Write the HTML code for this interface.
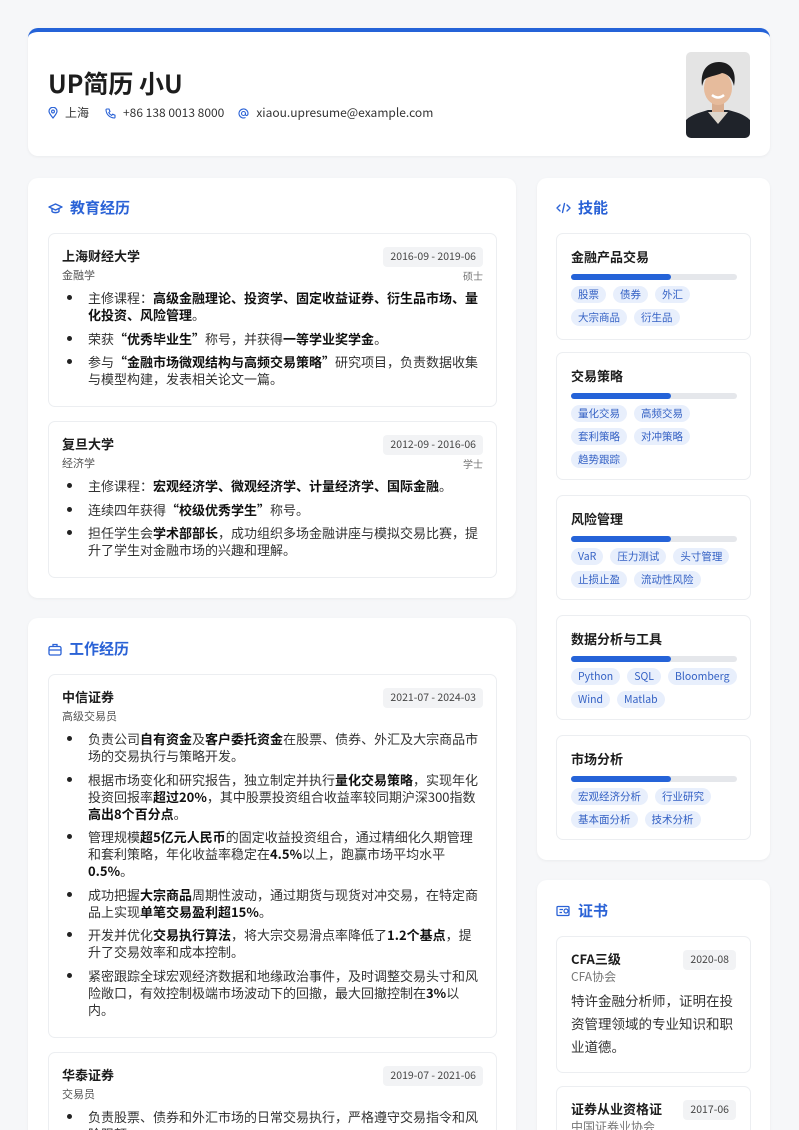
<!DOCTYPE html>
<html><head><meta charset="utf-8">
<style>
*{box-sizing:border-box;margin:0;padding:0}
html,body{width:799px;height:1130px;overflow:hidden}
body{background:#f6f7f9;font-family:"Noto Sans CJK SC","Liberation Sans",sans-serif;color:#222;position:relative}
.card{position:absolute;background:#fff;border-radius:10px;box-shadow:0 1px 3px rgba(0,0,0,.05)}
.hdr{left:28px;top:28px;width:742px;height:128px;border-top:4px solid #2563d8}
.name{position:absolute;left:20px;top:34px;font-size:25px;line-height:34px;font-weight:bold;color:#1d1d1d}
.contact{position:absolute;left:20px;top:72px;font-size:12px;line-height:18px;color:#333;display:flex;align-items:center}
.contact span{display:flex;align-items:center;margin-right:14px}
.contact svg{margin-right:7px}
.photo{position:absolute;left:658px;top:20px;width:64px;height:86px;border-radius:5px;overflow:hidden}
.st{position:absolute;left:20px;top:18px;font-size:15px;line-height:24px;font-weight:bold;color:#2a62d6;display:flex;align-items:center}
.st svg{margin-right:7px}
.item{position:absolute;left:20px;border:1px solid #eceef1;border-radius:7px;background:#fff}
.it{position:absolute;left:13px;top:12px;font-size:13px;line-height:20px;font-weight:bold;color:#1d1d1d}
.sub{position:absolute;left:13px;top:33px;font-size:11px;line-height:16px;color:#555}
.deg{position:absolute;right:13px;top:34px;font-size:10px;line-height:16px;color:#777}
.date{position:absolute;right:13px;top:13px;background:#f2f3f5;border-radius:4px;font-size:10.5px;line-height:14px;color:#444;padding:3px 7px}
ul{position:absolute;left:13px;right:13px;top:55px;list-style:none;font-size:13px;line-height:17px;color:#333}
li{position:relative;padding-left:26px;margin-bottom:6.5px}
li:before{content:"";position:absolute;left:5px;top:6px;width:5px;height:5px;border-radius:50%;background:#222}
b{color:#111}
.sk{position:absolute;left:19px;width:195px;border:1px solid #eceef1;border-radius:7px}
.sk h4{position:absolute;left:14px;top:13px;font-size:13px;line-height:20px;color:#1d1d1d}
.bar{position:absolute;left:14px;top:40px;width:166px;height:6px;border-radius:3px;background:#e5e7eb}
.bar i{display:block;width:60%;height:100%;border-radius:3px;background:#2563d8}
.tags{position:absolute;left:14px;top:52px;width:170px;display:flex;flex-wrap:wrap;gap:6px 7px}
.tags span{background:#e8effc;color:#3461c4;font-size:10.5px;height:17px;line-height:17px;padding:0 7px;border-radius:9px}
.ce{position:absolute;left:19px;width:195px;border:1px solid #eceef1;border-radius:7px}
.ce h4{position:absolute;left:14px;top:12px;font-size:13px;line-height:20px;color:#1d1d1d}
.ce .date{right:14px;top:13px}
.ce .sub{left:14px;top:32px;font-size:12px;color:#777}
.ce p{position:absolute;left:14px;top:52px;width:170px;font-size:13.5px;line-height:23px;color:#333}
</style></head><body>
<div class="card hdr">
 <div class="name">UP简历 小U</div>
 <div class="contact">
  <span><svg width="10" height="12" viewBox="0 0 10 12"><path d="M5 11C2 7.5 1 6 1 4.3A4 4 0 0 1 9 4.3C9 6 8 7.5 5 11Z" fill="none" stroke="#2a62d6" stroke-width="1.2"/><circle cx="5" cy="4.5" r="1.4" fill="none" stroke="#2a62d6" stroke-width="1.1"/></svg>上海</span>
  <span style="margin-left:2px"><svg width="11" height="11" viewBox="0 0 11 11"><path d="M2 1L4 1 5 3.5 3.8 4.6C4.5 6 5.3 6.8 6.6 7.4L7.7 6.2 10 7.2 10 9.2C10 9.7 9.6 10 9 10 4.5 9.6 1.4 6.5 1 2 1 1.4 1.3 1 2 1Z" fill="none" stroke="#2a62d6" stroke-width="1.1"/></svg>+86 138 0013 8000</span>
  <span><svg width="11" height="11" viewBox="0 0 11 11"><circle cx="5.5" cy="5.5" r="2" fill="none" stroke="#2a62d6" stroke-width="1.1"/><path d="M7.5 5.5V6.5C7.5 8 10 8 10 5.5A4.5 4.5 0 1 0 7.5 9.5" fill="none" stroke="#2a62d6" stroke-width="1.1"/></svg>xiaou.upresume@example.com</span>
 </div>
 <div class="photo"><svg width="64" height="86" viewBox="0 0 64 86"><rect width="64" height="86" fill="#e4e4e4"/><path d="M0 86V68C6 62 16 60 22 58L42 58C50 60 58 62 64 68V86Z" fill="#1f232a"/><path d="M22 60L32 72 42 60Z" fill="#ddd6cc"/><rect x="26" y="48" width="12" height="12" fill="#d9ad8f"/><ellipse cx="32" cy="36" rx="14" ry="17" fill="#e6bb9c"/><path d="M16 34C14 18 22 10 33 10 45 10 51 20 48 34 46 26 42 22 36 21 30 24 22 24 18 28Z" fill="#1c1c1e"/><path d="M26 43Q32 48 38 43" stroke="#fff" stroke-width="2.5" fill="none"/></svg></div>
</div>

<div class="card" style="left:28px;top:178px;width:488px;height:420px">
 <div class="st"><svg width="15" height="13" viewBox="0 0 15 13"><path d="M1 5L7.5 2 14 5 7.5 8Z" fill="none" stroke="#2a62d6" stroke-width="1.4" stroke-linejoin="round"/><path d="M4 6.5V9.5C5.5 11 9.5 11 11 9.5V6.5" fill="none" stroke="#2a62d6" stroke-width="1.4"/></svg>教育经历</div>
 <div class="item" style="top:55px;width:449px;height:174px">
  <div class="it">上海财经大学</div><div class="date">2016-09 - 2019-06</div>
  <div class="sub">金融学</div><div class="deg">硕士</div>
  <ul><li>主修课程：<b>高级金融理论、投资学、固定收益证券、衍生品市场、量化投资、风险管理</b>。</li>
  <li>荣获<b>“优秀毕业生”</b>称号，并获得<b>一等学业奖学金</b>。</li>
  <li>参与<b>“金融市场微观结构与高频交易策略”</b>研究项目，负责数据收集与模型构建，发表相关论文一篇。</li></ul>
 </div>
 <div class="item" style="top:243px;width:449px;height:157px">
  <div class="it">复旦大学</div><div class="date">2012-09 - 2016-06</div>
  <div class="sub">经济学</div><div class="deg">学士</div>
  <ul><li>主修课程：<b>宏观经济学、微观经济学、计量经济学、国际金融</b>。</li>
  <li>连续四年获得<b>“校级优秀学生”</b>称号。</li>
  <li>担任学生会<b>学术部部长</b>，成功组织多场金融讲座与模拟交易比赛，提升了学生对金融市场的兴趣和理解。</li></ul>
 </div>
</div>

<div class="card" style="left:28px;top:618px;width:488px;height:530px">
 <div class="st" style="top:19px"><svg width="14" height="13" viewBox="0 0 14 13"><rect x="1" y="3.5" width="12" height="8.5" rx="1.5" fill="none" stroke="#2a62d6" stroke-width="1.3"/><path d="M5 3.5V1.5H9V3.5M1 7H13" fill="none" stroke="#2a62d6" stroke-width="1.3"/></svg>工作经历</div>
 <div class="item" style="top:56px;width:449px;height:364px">
  <div class="it">中信证券</div><div class="date">2021-07 - 2024-03</div>
  <div class="sub">高级交易员</div>
  <ul><li>负责公司<b>自有资金</b>及<b>客户委托资金</b>在股票、债券、外汇及大宗商品市场的交易执行与策略开发。</li>
  <li>根据市场变化和研究报告，独立制定并执行<b>量化交易策略</b>，实现年化投资回报率<b>超过20%</b>，其中股票投资组合收益率较同期沪深300指数<b>高出8个百分点</b>。</li>
  <li>管理规模<b>超5亿元人民币</b>的固定收益投资组合，通过精细化久期管理和套利策略，年化收益率稳定在<b>4.5%</b>以上，跑赢市场平均水平<b>0.5%</b>。</li>
  <li>成功把握<b>大宗商品</b>周期性波动，通过期货与现货对冲交易，在特定商品上实现<b>单笔交易盈利超15%</b>。</li>
  <li>开发并优化<b>交易执行算法</b>，将大宗交易滑点率降低了<b>1.2个基点</b>，提升了交易效率和成本控制。</li>
  <li>紧密跟踪全球宏观经济数据和地缘政治事件，及时调整交易头寸和风险敞口，有效控制极端市场波动下的回撤，最大回撤控制在<b>3%</b>以内。</li></ul>
 </div>
 <div class="item" style="top:434px;width:449px;height:120px">
  <div class="it">华泰证券</div><div class="date">2019-07 - 2021-06</div>
  <div class="sub">交易员</div>
  <ul><li>负责股票、债券和外汇市场的日常交易执行，严格遵守交易指令和风险限额。</li></ul>
 </div>
</div>

<div class="card" style="left:537px;top:178px;width:233px;height:682px">
 <div class="st" style="left:19px"><svg width="15" height="12" viewBox="0 0 15 12"><path d="M4 3L1 6 4 9M11 3L14 6 11 9M8.5 1.5L6.5 10.5" fill="none" stroke="#2a62d6" stroke-width="1.4" stroke-linecap="round" stroke-linejoin="round"/></svg>技能</div>
 <div class="sk" style="top:55px;height:107px"><h4>金融产品交易</h4><div class="bar"><i></i></div><div class="tags"><span>股票</span><span>债券</span><span>外汇</span><span>大宗商品</span><span>衍生品</span></div></div>
 <div class="sk" style="top:174px;height:128px"><h4>交易策略</h4><div class="bar"><i></i></div><div class="tags"><span>量化交易</span><span>高频交易</span><span>套利策略</span><span>对冲策略</span><span>趋势跟踪</span></div></div>
 <div class="sk" style="top:317px;height:105px"><h4>风险管理</h4><div class="bar"><i></i></div><div class="tags"><span>VaR</span><span>压力测试</span><span>头寸管理</span><span>止损止盈</span><span>流动性风险</span></div></div>
 <div class="sk" style="top:437px;height:105px"><h4>数据分析与工具</h4><div class="bar"><i></i></div><div class="tags"><span>Python</span><span>SQL</span><span>Bloomberg</span><span>Wind</span><span>Matlab</span></div></div>
 <div class="sk" style="top:557px;height:105px"><h4>市场分析</h4><div class="bar"><i></i></div><div class="tags"><span>宏观经济分析</span><span>行业研究</span><span>基本面分析</span><span>技术分析</span></div></div>
</div>

<div class="card" style="left:537px;top:880px;width:233px;height:280px">
 <div class="st" style="left:19px;top:19px"><svg width="15" height="12" viewBox="0 0 15 12"><rect x="1" y="1.5" width="12" height="9" rx="1" fill="none" stroke="#2a62d6" stroke-width="1.3"/><path d="M3.5 4.5H7M3.5 7.5H6" stroke="#2a62d6" stroke-width="1.2"/><circle cx="10" cy="6" r="2" fill="#fff" stroke="#2a62d6" stroke-width="1.2"/></svg>证书</div>
 <div class="ce" style="top:56px;height:137px"><h4>CFA三级</h4><div class="date">2020-08</div><div class="sub">CFA协会</div><p>特许金融分析师，证明在投资管理领域的专业知识和职业道德。</p></div>
 <div class="ce" style="top:206px;height:80px"><h4>证券从业资格证</h4><div class="date">2017-06</div><div class="sub">中国证券业协会</div></div>
</div>
</body></html>
